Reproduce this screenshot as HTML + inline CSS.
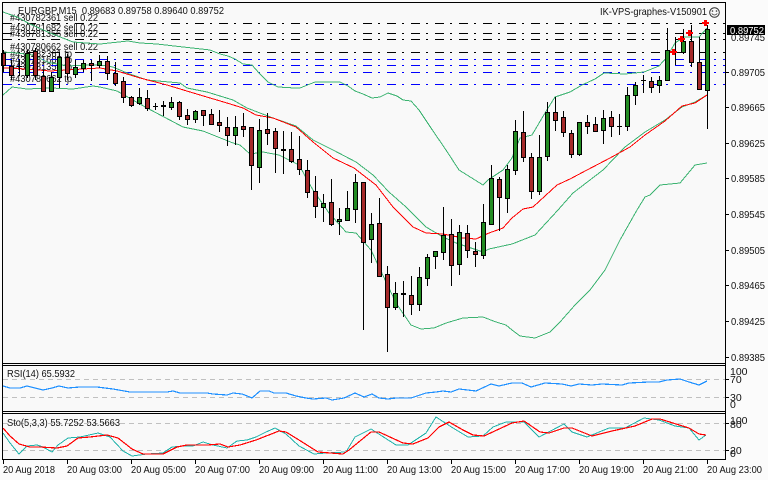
<!DOCTYPE html>
<html><head><meta charset="utf-8"><title>EURGBP,M15</title>
<style>
html,body{margin:0;padding:0;background:#fff;width:768px;height:480px;overflow:hidden}
svg{display:block}
text{font-family:"Liberation Sans",sans-serif;font-size:10.5px;fill:#111}
.l{fill:none;shape-rendering:crispEdges}
.c{shape-rendering:crispEdges}
</style></head><body>
<svg width="768" height="480" viewBox="0 0 768 480" xmlns="http://www.w3.org/2000/svg">
<rect x="0" y="0" width="768" height="480" fill="#fbfbfb"/>
<rect x="2" y="2" width="724" height="458" fill="#f9f9f9"/>
<!-- order labels -->
<g>
<text x="10" y="21" textLength="88" lengthAdjust="spacingAndGlyphs">#430782361 sell 0.22</text>
<text x="10" y="31" textLength="88" lengthAdjust="spacingAndGlyphs">#430781682 sell 0.22</text>
<text x="10" y="37" textLength="88" lengthAdjust="spacingAndGlyphs">#430781356 sell 0.22</text>
<text x="10" y="50" textLength="88" lengthAdjust="spacingAndGlyphs">#430780662 sell 0.22</text>
<text x="10" y="57" textLength="62" lengthAdjust="spacingAndGlyphs">#430782361 tp</text>
<text x="10" y="63" textLength="62" lengthAdjust="spacingAndGlyphs">#430781682 tp</text>
<text x="10" y="70" textLength="62" lengthAdjust="spacingAndGlyphs">#430781356 tp</text>
<text x="10" y="82" textLength="62" lengthAdjust="spacingAndGlyphs">#430780662 tp</text>
</g>
<!-- order lines -->
<g class="l" stroke="#000" stroke-dasharray="9 6 2 7">
<path d="M3 23.5H725M3 33.5H725M3 39.5H725M3 52.5H725"/>
</g>
<g class="l" stroke="#0000ff" stroke-dasharray="9 6 2 7">
<path d="M3 59.5H725M3 65.5H725M3 72.5H725M3 84.5H725"/>
</g>
<!-- bands -->
<g class="l" stroke="#3cb371">
<polyline points="3,12 17,17 30,24 50,33 73,42 100,44 128,41 140,43 157,44 183,47 210,50 220,54 228,56 235,59 243,64 252,65 259,73 268,82 278,87 295,88 300,88 315,82 340,82 348,86 355,91 363,94 372,98 380,97 388,93 397,96 403,100 411,101 419,110 431,128 446,150 459,170 483,185 488,180 503,170 512,158 520,138 532,135 545,113 555,97 570,92 582,85 595,79 604,73 625,74 644,72 659,66 667,57 675,43 684,37 699,37 707,28"/>
<polyline points="3,52 17,53 33,55 47,62 67,66 90,65 100,65 113,67 127,73 147,80 180,83 187,88 207,92 233,100 247,108 260,113 273,118 296,126 313,140 333,150 356,162 373,175 389,192 406,207 426,227 443,237 456,243 483,252 489,249 512,244 535,235 558,210 573,193 603,170 625,147 645,132 665,120 682,107 695,102 707,95"/>
<polyline points="3,95 12,87 27,89 50,88 73,89 93,86 100,87 117,91 147,108 183,127 203,131 233,143 240,145 250,154 263,152 279,155 299,165 313,190 329,213 346,232 356,233 371,250 379,267 396,303 411,325 421,329 434,328 446,323 463,318 483,317 496,322 506,325 512,330 520,336 535,338 550,332 560,322 575,305 590,290 605,270 620,240 637,210 645,197 650,195 660,185 680,183 695,165 707,163"/>
</g>
<polyline class="l" stroke="#ff0000" points="3,68 27,69 50,71 83,69 100,68 117,71 140,78 167,85 200,95 227,103 243,108 256,115 273,118 296,127 313,142 333,158 354,168 363,175 376,185 393,207 413,227 426,233 443,234 463,238 476,239 489,233 503,228 512,218 523,209 533,207 557,185 570,179 587,170 610,158 630,147 645,135 665,121 682,106 695,103 707,95"/>
<!-- wicks -->
<path class="c" fill="none" stroke="#000" d="M3.5 50V72M11.5 60V80M19.5 59V76M27.5 50V78M35.5 48V80M43.5 70V92M51.5 72V92M59.5 52V88M67.5 54V80M75.5 60V78M83.5 60V72M91.5 60V81M99.5 55V68M107.5 56V80M115.5 62V86M123.5 77V103M131.5 96V107M139.5 88V105M147.5 90V111M155.5 103V110M163.5 101V116M171.5 97V110M179.5 101V120M187.5 109V125M195.5 110V123M203.5 110V126M211.5 109V125M219.5 110V132M227.5 117V146M235.5 116V145M243.5 113V137M251.5 127V190M259.5 119V183M267.5 113V145M275.5 128V173M283.5 131V174M291.5 132V163M299.5 136V175M307.5 160V198M315.5 176V218M323.5 194V222M331.5 179V226M339.5 208V235M347.5 191V221M355.5 174V223M363.5 182V330M371.5 213V263M379.5 198V277M387.5 266V352M395.5 282V310M403.5 281V317M411.5 276V315M419.5 267V311M427.5 254V286M435.5 251V269M443.5 207V260M451.5 219V286M459.5 225V275M467.5 225V258M475.5 242V267M483.5 204V259M491.5 165V224M499.5 177V231M507.5 165V213M515.5 120V175M523.5 111V162M531.5 153V199M539.5 135V195M547.5 102V161M555.5 97V131M563.5 111V137M571.5 130V158M579.5 122V156M587.5 115V134M595.5 117V132M603.5 110V144M611.5 111V137M619.5 114V135M627.5 87V131M635.5 82V105M643.5 75V93M651.5 77V93M659.5 76V93M667.5 28V80M675.5 37V65M683.5 29V54M691.5 25V67M699.5 37V89M707.5 25V129"/>
<!-- red bodies -->
<path class="c" fill="#a52a2a" stroke="#000" d="M1.5 53.5h4V65.5h-4zM9.5 66.5h4V75.5h-4zM33.5 51.5h4V75.5h-4zM41.5 76.5h4V91.5h-4zM65.5 57.5h4V73.5h-4zM89.5 63.5h4V65.5h-4zM105.5 61.5h4V73.5h-4zM113.5 73.5h4V83.5h-4zM121.5 81.5h4V97.5h-4zM129.5 97.5h4V105.5h-4zM145.5 98.5h4V108.5h-4zM177.5 102.5h4V116.5h-4zM185.5 115.5h4V119.5h-4zM201.5 110.5h4V115.5h-4zM209.5 114.5h4V124.5h-4zM217.5 122.5h4V125.5h-4zM225.5 127.5h4V135.5h-4zM241.5 126.5h4V129.5h-4zM249.5 127.5h4V165.5h-4zM265.5 129.5h4V133.5h-4zM273.5 131.5h4V148.5h-4zM289.5 149.5h4V161.5h-4zM297.5 159.5h4V169.5h-4zM305.5 170.5h4V192.5h-4zM313.5 191.5h4V206.5h-4zM329.5 202.5h4V224.5h-4zM361.5 182.5h4V242.5h-4zM377.5 223.5h4V276.5h-4zM385.5 274.5h4V307.5h-4zM409.5 295.5h4V304.5h-4zM449.5 234.5h4V265.5h-4zM465.5 233.5h4V250.5h-4zM473.5 251.5h4V254.5h-4zM497.5 179.5h4V197.5h-4zM521.5 132.5h4V157.5h-4zM529.5 157.5h4V191.5h-4zM553.5 112.5h4V120.5h-4zM561.5 117.5h4V132.5h-4zM569.5 133.5h4V154.5h-4zM585.5 122.5h4V126.5h-4zM593.5 124.5h4V131.5h-4zM609.5 117.5h4V126.5h-4zM649.5 81.5h4V87.5h-4zM689.5 41.5h4V62.5h-4zM697.5 62.5h4V89.5h-4z"/>
<!-- green bodies -->
<path class="c" fill="#228b22" stroke="#000" d="M25.5 53.5h4V75.5h-4zM49.5 77.5h4V91.5h-4zM57.5 57.5h4V77.5h-4zM73.5 67.5h4V74.5h-4zM81.5 63.5h4V68.5h-4zM97.5 61.5h4V65.5h-4zM137.5 97.5h4V103.5h-4zM169.5 102.5h4V107.5h-4zM193.5 111.5h4V119.5h-4zM233.5 127.5h4V135.5h-4zM257.5 130.5h4V167.5h-4zM321.5 203.5h4V207.5h-4zM337.5 219.5h4V221.5h-4zM345.5 208.5h4V220.5h-4zM353.5 182.5h4V209.5h-4zM369.5 224.5h4V239.5h-4zM393.5 293.5h4V307.5h-4zM417.5 277.5h4V304.5h-4zM425.5 257.5h4V278.5h-4zM433.5 251.5h4V256.5h-4zM441.5 235.5h4V252.5h-4zM457.5 232.5h4V264.5h-4zM481.5 222.5h4V255.5h-4zM489.5 178.5h4V224.5h-4zM505.5 169.5h4V198.5h-4zM513.5 131.5h4V170.5h-4zM537.5 157.5h4V191.5h-4zM545.5 112.5h4V156.5h-4zM577.5 122.5h4V154.5h-4zM601.5 118.5h4V130.5h-4zM625.5 95.5h4V126.5h-4zM633.5 85.5h4V95.5h-4zM657.5 80.5h4V85.5h-4zM665.5 50.5h4V80.5h-4zM681.5 41.5h4V52.5h-4zM705.5 29.5h4V90.5h-4z"/>
<!-- doji -->
<path class="c" fill="#000" d="M17 66h5v1h-5zM153 106h5v1h-5zM161 105h5v2h-5zM281 149h5v2h-5zM401 293h5v2h-5zM617 126h5v1h-5zM641 80h5v1h-5zM673 52h5v1h-5z"/>
<!-- arrows -->
<path class="c" fill="#ff0000" d="M670 51h7v2h-7zM672 49h3v6h-3zM678 38h7v2h-7zM680 36h3v6h-3zM686 32h7v2h-7zM688 30h3v6h-3zM702 22h7v2h-7zM704 20h3v6h-3z"/>
<!-- header text -->
<text x="18" y="14" textLength="206" lengthAdjust="spacingAndGlyphs">EURGBP,M15&#160;&#160;0.89683 0.89758 0.89640 0.89752</text>
<text x="600" y="15" textLength="107" lengthAdjust="spacingAndGlyphs">IK-VPS-graphes-V150901</text>
<circle cx="714.5" cy="12.5" r="4.8" fill="none" stroke="#333"/>
<circle cx="712.5" cy="11" r=".8" fill="#333"/><circle cx="716.5" cy="11" r=".8" fill="#333"/>
<path d="M711.7 13.5q2.8 3 5.6 0" fill="none" stroke="#333" stroke-width=".8"/>
<!-- levels -->
<g class="l" stroke="#c0c0c0" stroke-dasharray="5 4">
<path d="M3 379.5H725M3 397.5H725M3 423.5H725M3 450.5H725"/>
</g>
<!-- RSI -->
<polyline class="l" stroke="#1e90ff" stroke-width="1.2" points="3,386 10,388 20,388 27,386 35,388 43,390 52,388 59,386 68,388 80,387 97,387 113,389 130,392 140,392 167,392 173,391 180,393 207,393 213,394 227,395 233,393 242,394 252,398 260,391 269,391 274,393 286,393 296,396 306,398 313,399 326,398 332,400 344,398 355,393 364,397 372,394 379,398 388,399 396,398 411,398 426,393 436,392 443,391 451,392 459,389 476,391 491,384 499,386 512,383 522,383 531,387 545,383 562,384 571,386 579,384 592,385 602,384 622,385 629,383 649,382 659,382 667,380 680,379 689,382 699,385 707,381"/>
<text x="7" y="377" textLength="68" lengthAdjust="spacingAndGlyphs">RSI(14) 65.5932</text>
<!-- Sto -->
<polyline class="l" stroke="#20b2aa" points="3,433 10,443 19,454 27,446 37,445 43,447 52,452 58,445 68,438 80,437 98,433 110,437 123,451 132,456 147,454 163,453 172,447 185,446 193,446 203,442 213,445 227,448 237,441 247,440 256,437 266,432 275,428 286,434 299,446 314,454 326,453 346,452 355,437 371,429 396,445 408,445 426,433 436,417 453,428 468,437 483,436 493,427 506,422 524,422 539,437 564,424 572,432 587,437 609,428 625,428 644,418 659,420 675,426 689,428 699,440 706,435"/>
<polyline class="l" stroke="#ff0000" stroke-width="1.2" points="3,428 10,436 19,444 30,447 40,447 57,448 67,446 78,438 90,437 107,435 118,438 132,449 143,454 163,454 177,447 187,445 207,445 220,444 228,447 240,445 256,440 279,431 286,432 299,440 318,452 343,454 349,450 371,432 379,432 403,443 413,444 428,438 439,427 449,422 463,430 473,435 484,436 512,423 524,421 540,432 549,433 564,428 572,428 592,436 612,431 635,426 652,419 660,419 689,428 699,434 706,435"/>
<text x="7" y="426" textLength="113" lengthAdjust="spacingAndGlyphs">Sto(5,3,3) 55.7252 53.5663</text>
<!-- frames -->
<g class="c" fill="none" stroke="#000">
<path d="M2.5 2.5H725.5V459.5H2.5ZM2.5 363.5H725.5M2.5 365.5H725.5M2.5 411.5H725.5M2.5 413.5H725.5"/>
<path d="M726 72.5h3M726 107.5h3M726 143.5h3M726 178.5h3M726 214.5h3M726 250.5h3M726 285.5h3M726 321.5h3M726 357.5h3M726 379.5h3M726 397.5h3M726 423.5h3M726 450.5h3"/>
<path d="M3.5 460v4M67.5 460v4M131.5 460v4M195.5 460v4M259.5 460v4M323.5 460v4M387.5 460v4M451.5 460v4M515.5 460v4M579.5 460v4M643.5 460v4M707.5 460v4"/>
</g>
<!-- y axis labels -->
<g>
<text x="731" y="41" textLength="34" lengthAdjust="spacingAndGlyphs">0.89745</text>
<text x="731" y="76" textLength="34" lengthAdjust="spacingAndGlyphs">0.89705</text>
<text x="731" y="111" textLength="34" lengthAdjust="spacingAndGlyphs">0.89665</text>
<text x="731" y="147" textLength="34" lengthAdjust="spacingAndGlyphs">0.89625</text>
<text x="731" y="182" textLength="34" lengthAdjust="spacingAndGlyphs">0.89585</text>
<text x="731" y="218" textLength="34" lengthAdjust="spacingAndGlyphs">0.89545</text>
<text x="731" y="254" textLength="34" lengthAdjust="spacingAndGlyphs">0.89505</text>
<text x="731" y="289" textLength="34" lengthAdjust="spacingAndGlyphs">0.89465</text>
<text x="731" y="325" textLength="34" lengthAdjust="spacingAndGlyphs">0.89425</text>
<text x="731" y="361" textLength="34" lengthAdjust="spacingAndGlyphs">0.89385</text>
<text x="730" y="375">100</text>
<text x="730" y="383">70</text>
<text x="730" y="401">30</text>
<text x="730" y="408">0</text>
<text x="730" y="424">100</text>
<text x="730" y="428">80</text>
<text x="730" y="454">20</text>
<text x="730" y="457">0</text>
</g>
<rect x="727" y="25" width="38" height="10" fill="#000"/>
<text x="730" y="34" textLength="34" lengthAdjust="spacingAndGlyphs" style="fill:#fff">0.89752</text>
<!-- x axis labels -->
<g>
<text x="3" y="473" textLength="52" lengthAdjust="spacingAndGlyphs">20 Aug 2018</text>
<text x="67" y="473" textLength="55" lengthAdjust="spacingAndGlyphs">20 Aug 03:00</text>
<text x="131" y="473" textLength="55" lengthAdjust="spacingAndGlyphs">20 Aug 05:00</text>
<text x="195" y="473" textLength="55" lengthAdjust="spacingAndGlyphs">20 Aug 07:00</text>
<text x="259" y="473" textLength="55" lengthAdjust="spacingAndGlyphs">20 Aug 09:00</text>
<text x="323" y="473" textLength="55" lengthAdjust="spacingAndGlyphs">20 Aug 11:00</text>
<text x="387" y="473" textLength="55" lengthAdjust="spacingAndGlyphs">20 Aug 13:00</text>
<text x="451" y="473" textLength="55" lengthAdjust="spacingAndGlyphs">20 Aug 15:00</text>
<text x="515" y="473" textLength="55" lengthAdjust="spacingAndGlyphs">20 Aug 17:00</text>
<text x="579" y="473" textLength="55" lengthAdjust="spacingAndGlyphs">20 Aug 19:00</text>
<text x="643" y="473" textLength="55" lengthAdjust="spacingAndGlyphs">20 Aug 21:00</text>
<text x="707" y="473" textLength="55" lengthAdjust="spacingAndGlyphs">20 Aug 23:00</text>
</g>
</svg>
</body></html>
